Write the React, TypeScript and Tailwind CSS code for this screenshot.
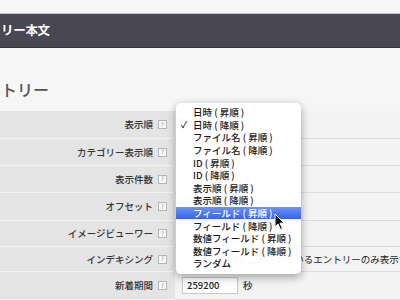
import React from 'react'

const font = { fontFamily: '"Noto Sans CJK JP", "Noto Sans", sans-serif' }

const rows = [
  { label: '表示順', h: 'h-[28px]' },
  { label: 'カテゴリー表示順', h: 'h-[27px]' },
  { label: '表示件数', h: 'h-[27px]' },
  { label: 'オフセット', h: 'h-[28px]' },
  { label: 'イメージビューワー', h: 'h-[26px]' },
  { label: 'インデキシング', h: 'h-[25px]' },
  { label: '新着期間', h: 'h-[28px]' },
]

const menuItems = [
  '日時 ( 昇順 )',
  '日時 ( 降順 )',
  'ファイル名 ( 昇順 )',
  'ファイル名 ( 降順 )',
  'ID ( 昇順 )',
  'ID ( 降順 )',
  '表示順 ( 昇順 )',
  '表示順 ( 降順 )',
  'フィールド ( 昇順 )',
  'フィールド ( 降順 )',
  '数値フィールド ( 昇順 )',
  '数値フィールド ( 降順 )',
  'ランダム',
]

const Help = () => (
  <span className="ml-[5px] flex h-[9px] w-[9px] items-center justify-center border border-[#b5b5b5] bg-[#f7f7f7] text-[6px] leading-none text-[#888]">
    ?
  </span>
)

const RowContent = ({ index }: { index: number }) => {
  if (index === 0) {
    return <div className="h-[20px] w-[116px] rounded-[4px] border border-[#d0d0d0] bg-[#ebebeb]" />
  }
  if (index === 1) {
    return <div className="h-[18px] w-[112px] rounded-[4px] border border-[#dcdcdc] bg-[#f0f0f0]" />
  }
  if (index === 5) {
    return (
      <div className="ml-[8px] shrink-0 whitespace-nowrap text-[9.5px] text-[#222]">
        ステータスが公開されているエントリーのみ表示する
      </div>
    )
  }
  if (index === 6) {
    return (
      <div className="flex items-center">
        <div className="flex h-[17px] w-[56px] items-center border border-[#c9c9c9] bg-white pl-[4px] text-[9.5px] font-medium text-[#222]">
          259200
        </div>
        <span className="ml-[5px] text-[9.5px] font-medium text-[#333]">秒</span>
      </div>
    )
  }
  return null
}

export default function App() {
  return (
    <div className="relative h-[300px] w-[400px] overflow-hidden bg-[#f6f6f6]" style={font}>
      <div className="h-[13px]" />
      <header className="flex h-[35px] items-center border-t border-b border-t-[#c4c4c4] border-b-[#33323a] bg-[#484752]">
        <h1 className="pl-[1px] text-[12.5px] font-bold tracking-[-0.3px] text-white">リー本文</h1>
      </header>
      <div className="flex h-[63px] items-start pt-[33px]">
        <h2 className="pl-[1px] text-[16px] leading-[16px] font-medium text-[#555]">トリー</h2>
      </div>
      <div className="flex flex-col">
        {rows.map((row, i) => (
          <div key={row.label} className={`flex ${row.h}`}>
            <div className="flex w-[175px] shrink-0 items-center justify-end border-b border-[#f3f3f3] bg-[#e4e4e4] pr-[8px]">
              <span className="text-[9.5px] font-medium whitespace-nowrap text-[#333]">{row.label}</span>
              <Help />
            </div>
            <div className="flex min-w-0 flex-1 items-center overflow-hidden border-b border-[#dcdcdc] bg-[#f3f3f3] pl-[7px]">
              <RowContent index={i} />
            </div>
          </div>
        ))}
      </div>

      {/* popup menu */}
      <div className="absolute top-[103px] left-[176px] h-[171px] w-[125px] rounded-[5px] bg-white/[0.97] py-[3px] shadow-[0_3px_10px_rgba(0,0,0,0.35)]">
        {menuItems.map((item, i) => {
          const active = i === 8
          return (
            <div
              key={item}
              className={`relative flex h-[12.6px] items-center pl-[17px] text-[9.5px] font-medium whitespace-nowrap ${
                active
                  ? 'bg-gradient-to-b from-[#6f92f4] to-[#3464ea] text-white'
                  : 'text-[#1a1a1a]'
              }`}
            >
              {i === 1 && (
                <span className="absolute left-[5px] text-[9px] text-[#1a1a1a]">✓</span>
              )}
              {item}
            </div>
          )
        })}
      </div>

      {/* mouse cursor */}
      <svg className="absolute top-[213px] left-[274px]" width="12" height="18" viewBox="0 0 12 18">
        <path
          d="M1 1 L1 14 L4 11 L6.5 16.5 L8.5 15.5 L6 10.2 L10.3 10.2 Z"
          fill="#111"
          stroke="#fff"
          strokeWidth="1"
          strokeLinejoin="round"
        />
      </svg>
    </div>
  )
}
